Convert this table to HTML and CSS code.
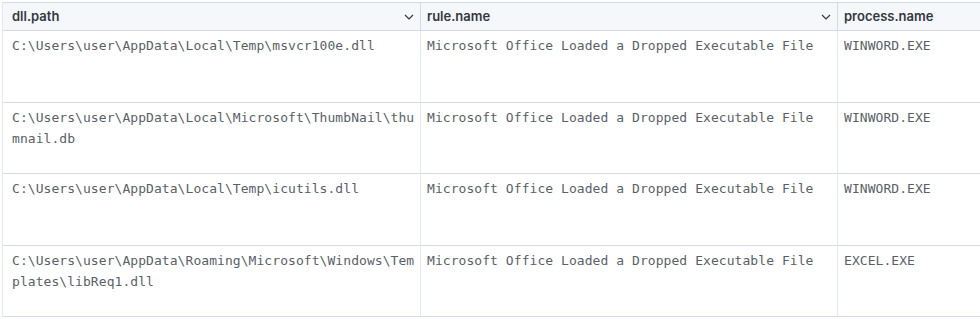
FILE: index.html
```html
<!DOCTYPE html>
<html lang="en">
<head>
  <meta charset="UTF-8" />
  <title>Alerts table</title>
  <link rel="stylesheet" href="styles.css">
</head>
<body>
  <div class="grid">
    <!-- header -->
    <div class="head-cell first">
      <span>dll.path</span>
      <svg class="chev" width="10" height="6" viewBox="0 0 10 6"><path d="M1 1l4 4 4-4" fill="none" stroke="#343741" stroke-width="1.2"/></svg>
    </div>
    <div class="head-cell">
      <span>rule.name</span>
      <svg class="chev" width="10" height="6" viewBox="0 0 10 6"><path d="M1 1l4 4 4-4" fill="none" stroke="#343741" stroke-width="1.2"/></svg>
    </div>
    <div class="head-cell last">
      <span>process.name</span>
    </div>

    <div class="cell first">C:\Users\user\AppData\Local\Temp\msvcr100e.dll</div>
    <div class="cell">Microsoft Office Loaded a Dropped Executable File</div>
    <div class="cell last">WINWORD.EXE</div>

    <div class="cell first">C:\Users\user\AppData\Local\Microsoft\ThumbNail\thumnail.db</div>
    <div class="cell">Microsoft Office Loaded a Dropped Executable File</div>
    <div class="cell last">WINWORD.EXE</div>

    <div class="cell first">C:\Users\user\AppData\Local\Temp\icutils.dll</div>
    <div class="cell">Microsoft Office Loaded a Dropped Executable File</div>
    <div class="cell last">WINWORD.EXE</div>

    <div class="cell first">C:\Users\user\AppData\Roaming\Microsoft\Windows\Templates\libReq1.dll</div>
    <div class="cell">Microsoft Office Loaded a Dropped Executable File</div>
    <div class="cell last">EXCEL.EXE</div>
  </div>
</body>
</html>
```

FILE: styles.css
```css
* { margin: 0; padding: 0; box-sizing: border-box; }

body {
  background: #ffffff;
  padding: 2px 0 0 2px;
  overflow: hidden;
}

.grid {
  display: grid;
  grid-template-columns: 418px 417px 1fr;
  border-left: 1px solid #e3e8f0;
  width: 990px;
}

/* header row */
.head-cell {
  height: 29px;
  display: flex;
  align-items: center;
  justify-content: space-between;
  padding: 0 6px 1px 6px;
  background: #f5f7fa;
  border-top: 1px solid #d3dae6;
  border-bottom: 1px solid #d3dae6;
  border-right: 1px solid #d3dae6;
  font-family: Inter, "Liberation Sans", sans-serif;
  font-size: 13px;
  font-weight: 600;
  color: #343741;
}
.chev { margin-top: 1px; }

/* body cells */
.cell {
  height: 71.5px;
  padding: 4px 4px 0 6px;
  border-bottom: 1px solid #d3dae6;
  border-right: 1px solid #e3e8f0;
  font-family: "DejaVu Sans Mono", "Liberation Mono", monospace;
  font-size: 13px;
  letter-spacing: 0.06px;
  line-height: 21px;
  color: #5a5f68;
  word-break: break-all;
}
.first { padding-left: 9px; }
.last { border-right: none; }
```
